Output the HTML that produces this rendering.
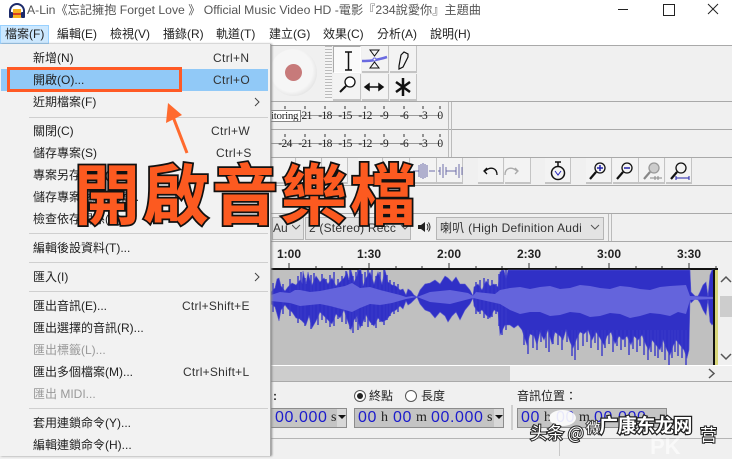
<!DOCTYPE html>
<html><head><meta charset="utf-8"><style>
html,body{margin:0;padding:0}
body{width:732px;height:456px;overflow:hidden;position:relative;background:#f0f0f0;font-family:"Liberation Sans","Noto Sans CJK TC",sans-serif;font-size:12px;color:#222}
div,span{position:absolute;white-space:nowrap}
.t{line-height:18px;height:18px}
.l{left:0;width:732px;height:1px;background:#a9a9a9}
.m{left:33px}.s{color:#333;letter-spacing:.35px}
.sep{left:29px;width:239px;height:1px;background:#cfcfcf}
.b{background:#f3f3f3;border-right:1px solid #c4c4c4;border-bottom:2px solid #c4c4c4;box-sizing:border-box}
.n{font:11.500px/12px "Liberation Serif",serif;color:#222;letter-spacing:-.6px;transform:translateX(-50%)}
.rt{font:bold 12px/14px "Liberation Sans",sans-serif;color:#222;transform:translateX(-50%);top:247px}
.box{background:#c4c4c4;border:1px solid #8c8c8c;box-sizing:border-box;height:20px;top:408px}
.dg{font:16px/18px "Liberation Sans",sans-serif;color:#1c1ccc;letter-spacing:.6px}
.u{font:14px/18px "Liberation Serif",serif;color:#222}
</style></head><body>
<!-- title -->
<div style="left:0;top:0;width:732px;height:45px;background:#fff"></div>
<svg style="position:absolute;left:8px;top:2px" width="18" height="18" viewBox="0 0 18 18"><path d="M2 11V9a7 7 0 0 1 14 0v2" fill="none" stroke="#1c2a6a" stroke-width="2"/><rect x="1" y="10" width="4" height="6" rx="1" fill="#1c2a6a"/><rect x="13" y="10" width="4" height="6" rx="1" fill="#1c2a6a"/><rect x="5" y="7" width="8" height="9" fill="#f5b21e"/><rect x="5" y="11" width="8" height="2" fill="#d8401e"/></svg>
<div class="t" style="left:27px;top:1px;font-size:12.200px;color:#555">A-Lin《忘記擁抱 Forget Love 》 Official Music Video HD -電影『234說愛你』主題曲</div>
<div style="left:618px;top:9px;width:10px;height:1px;background:#222"></div>
<div style="left:663px;top:4px;width:10px;height:10px;border:1px solid #222"></div>
<svg style="position:absolute;left:707px;top:3px" width="12" height="12"><path d="M1 1L11 11M11 1L1 11" stroke="#222" fill="none"/></svg>
<!-- menubar -->
<div style="left:0;top:25px;width:49px;height:19px;background:#cce8ff;border:1px solid #99d1ff;box-sizing:border-box"></div>
<div class="t" style="left:5px;top:25px">檔案(F)</div>
<div class="t" style="left:57px;top:25px">編輯(E)</div>
<div class="t" style="left:110px;top:25px">檢視(V)</div>
<div class="t" style="left:163px;top:25px">播錄(R)</div>
<div class="t" style="left:216px;top:25px">軌道(T)</div>
<div class="t" style="left:269px;top:25px">建立(G)</div>
<div class="t" style="left:323px;top:25px">效果(C)</div>
<div class="t" style="left:377px;top:25px">分析(A)</div>
<div class="t" style="left:430px;top:25px">說明(H)</div>
<div class="l" style="top:45px"></div>
<div class="l" style="top:101px"></div>
<div class="l" style="top:129px"></div>
<div class="l" style="top:157px"></div>
<div class="l" style="top:185px"></div>
<div class="l" style="top:213px"></div>
<div class="l" style="top:241px"></div>
<!-- record -->
<div style="left:270px;top:49px;width:47px;height:47px;border-radius:50%;background:radial-gradient(circle at 46% 46%,#f6f6f6 58%,#e6e6e6 72%,#b8b8b8 93%,#f0f0f0 100%)"></div>
<div style="left:285px;top:64px;width:17px;height:17px;border-radius:50%;background:#c77a7a"></div>
<div style="left:325px;top:46px;width:7px;height:54px;background:repeating-linear-gradient(#bbb 0 1px,#f4f4f4 1px 3px)"></div>
<!-- tools -->
<div class="b" style="left:333px;top:46px;width:28px;height:27px;background:#fafafa;border:1px solid #aaa;border-right-color:#fff;border-bottom-color:#fff"></div>
<div class="b" style="left:362px;top:46px;width:27px;height:27px"></div>
<div class="b" style="left:390px;top:46px;width:27px;height:27px"></div>
<div class="b" style="left:333px;top:74px;width:28px;height:27px"></div>
<div class="b" style="left:362px;top:74px;width:27px;height:27px"></div>
<div class="b" style="left:390px;top:74px;width:27px;height:27px"></div>
<svg style="position:absolute;left:333px;top:46px" width="84" height="55" fill="none" stroke="#111">
<path d="M12 6h7M12 24h7M15.500 6v18" stroke-width="1.500"/>
<path d="M37 4h9l-4.500 6zM37 22h9l-4.500-6z" stroke-width="1"/>
<path d="M29 15c6 0 12 0 25-4" stroke="#6a6ae0" stroke-width="2.500"/><circle cx="41.500" cy="13.500" r="1.500" fill="#fff" stroke="#6a6ae0"/>
<path d="M66 20l2-11 3-3 4 2 0 3-5 10-4 2z" stroke-width="1.200"/>
<circle cx="17" cy="36" r="5" stroke-width="1.300" fill="#fff"/><path d="M13 40l-6 6" stroke-width="2"/>
<path d="M32 41h18M36 38l-4 3 4 3zM46 38l4 3-4 3z" stroke-width="1.500" fill="#111"/>
<path d="M70 32v18M63 36l14 10M77 36l-14 10" stroke-width="2.500"/>
</svg>
<!-- meters -->
<div style="left:270px;top:115px;width:171px;height:1px;background:#999"></div>
<div style="left:270px;top:143px;width:171px;height:1px;background:#999"></div>
<div style="left:448px;top:102px;width:1px;height:55px;background:#bbb"></div>
<div style="left:451px;top:102px;width:1px;height:55px;background:#bbb"></div>
<svg style="position:absolute;left:270px;top:105px" width="175" height="38" stroke="#333"><path d="M15 1v3M35 1v3M55 1v3M75 1v3M95 1v3M114 1v3M134 1v3M153 1v3M170 1v3M15 29v3M35 29v3M55 29v3M75 29v3M95 29v3M114 29v3M134 29v3M153 29v3M170 29v3"/></svg>
<div class="n" style="left:305px;top:110px">-21</div><div class="n" style="left:325px;top:110px">-18</div><div class="n" style="left:345px;top:110px">-15</div><div class="n" style="left:365px;top:110px">-12</div><div class="n" style="left:384px;top:110px">-9</div><div class="n" style="left:404px;top:110px">-6</div><div class="n" style="left:423px;top:110px">-3</div><div class="n" style="left:440px;top:110px">0</div>
<div class="n" style="left:285px;top:138px">-24</div><div class="n" style="left:305px;top:138px">-21</div><div class="n" style="left:325px;top:138px">-18</div><div class="n" style="left:345px;top:138px">-15</div><div class="n" style="left:365px;top:138px">-12</div><div class="n" style="left:384px;top:138px">-9</div><div class="n" style="left:404px;top:138px">-6</div><div class="n" style="left:423px;top:138px">-3</div><div class="n" style="left:440px;top:138px">0</div>
<div style="left:270px;top:110px;width:31px;height:12px;background:#fff;border:1px solid #888;box-sizing:border-box;overflow:hidden;font:11px/11px 'Liberation Serif',serif;color:#222;letter-spacing:-.3px">itoring</div>
<!-- row 3 buttons -->
<div class="b" style="left:272px;top:158px;width:24px;height:26px"></div><div class="b" style="left:297px;top:158px;width:25px;height:26px"></div><div class="b" style="left:323px;top:158px;width:25px;height:26px"></div><div class="b" style="left:358px;top:158px;width:25px;height:26px"></div><div class="b" style="left:384px;top:158px;width:26px;height:26px"></div>
<div class="b" style="left:411px;top:158px;width:26px;height:26px"></div>
<div class="b" style="left:437px;top:158px;width:26px;height:26px"></div>
<div class="b" style="left:478px;top:158px;width:26px;height:26px"></div>
<div class="b" style="left:505px;top:158px;width:26px;height:26px"></div>
<div class="b" style="left:545px;top:158px;width:26px;height:26px"></div>
<div class="b" style="left:586px;top:158px;width:26px;height:26px"></div>
<div class="b" style="left:613px;top:158px;width:26px;height:26px"></div>
<div class="b" style="left:639px;top:158px;width:26px;height:26px"></div>
<div class="b" style="left:666px;top:158px;width:26px;height:26px"></div>
<svg style="position:absolute;left:410px;top:158px" width="290" height="26" fill="none" stroke="#111">
<path d="M3 13h6M9 7v12M11 6v14M13 5v16M15 6v14M17 7v12M19 13h6" stroke="#6c6ca8"/>
<path d="M28 13h2M30 9v8M33 6v14M36 9v8M36 13h10M46 9v8M49 6v14M52 9v8" stroke="#6c6ca8"/>
<path d="M77 10l-3 3 3 3M75 13c6-5 12-3 12 4" stroke-width="1.300"/>
<path d="M105 10l3 3-3 3M107 13c-6-5-12-3-12 4" stroke="#aaa" stroke-width="1.300"/>
<circle cx="148" cy="15" r="6.500" stroke-width="1.500"/><path d="M148 4v4M145 4h6" stroke-width="1.500"/><path d="M145 13l3 4 3-4" stroke="#2222bb"/>
<circle cx="190" cy="10" r="5" stroke-width="1.300"/><path d="M186 14l-6 7" stroke-width="2.200"/><path d="M187 10h6M190 7v6" stroke="#2222aa" stroke-width="1.500"/>
<circle cx="217" cy="10" r="5" stroke-width="1.300"/><path d="M213 14l-6 7" stroke-width="2.200"/><path d="M214 10h6" stroke="#2222aa" stroke-width="1.500"/>
<circle cx="244" cy="10" r="5" stroke="#999" fill="#ccc" stroke-width="1.300"/><path d="M240 14l-6 7" stroke="#888" stroke-width="2.200"/><path d="M240 20h12M245 18v4M248 18v4" stroke="#888"/>
<circle cx="271" cy="10" r="5" stroke-width="1.300"/><path d="M267 14l-6 7" stroke-width="2.200"/><path d="M266 20h13M266 18v4M279 18v4" stroke="#2222aa"/>
</svg>
<!-- combos -->
<div style="left:272px;top:217px;width:32px;height:23px;background:#e3e3e3;border:1px solid #b5b5b5;box-sizing:border-box"></div>
<div class="t" style="left:273px;top:219px;color:#333">Au</div>
<div style="left:305px;top:217px;width:106px;height:23px;background:#e3e3e3;border:1px solid #b5b5b5;box-sizing:border-box"></div>
<div class="t" style="left:309px;top:219px;color:#333;letter-spacing:.2px">2 (Stereo) Recc</div>
<svg style="position:absolute;left:292px;top:224px" width="120" height="8" fill="none" stroke="#555"><path d="M0 1l4 4 4-4M109 1l4 4 4-4"/></svg>
<svg style="position:absolute;left:417px;top:220px" width="14" height="14"><path d="M1 5h3l4-3v10l-4-3H1z" fill="#222"/><path d="M10 4q2 3 0 6M11.500 2.500q3 4.500 0 9" fill="none" stroke="#222"/></svg>
<div style="left:436px;top:217px;width:168px;height:23px;background:#e3e3e3;border:1px solid #b5b5b5;box-sizing:border-box"></div>
<div class="t" style="left:440px;top:219px;color:#333;letter-spacing:.25px">喇叭 (High Definition Audi</div>
<svg style="position:absolute;left:590px;top:224px" width="10" height="8" fill="none" stroke="#555"><path d="M1 1l4 4 4-4"/></svg>
<div style="left:608px;top:214px;width:1px;height:27px;background:#bbb"></div><div style="left:611px;top:214px;width:1px;height:27px;background:#bbb"></div>
<!-- ruler -->
<div style="left:272px;top:242px;width:460px;height:27px;background:#f0f0f0"></div>
<div class="rt" style="left:289px">1:00</div><div class="rt" style="left:369px">1:30</div><div class="rt" style="left:449px">2:00</div><div class="rt" style="left:529px">2:30</div><div class="rt" style="left:609px">3:00</div><div class="rt" style="left:689px">3:30</div>
<svg style="position:absolute;left:272px;top:262px" width="450" height="7" stroke="#333"><path d="M17 1v5M97 1v5M177 1v5M257 1v5M337 1v5M417 1v5" /><path d="M44 4v2M70 4v2M124 4v2M150 4v2M204 4v2M230 4v2M284 4v2M310 4v2M364 4v2M390 4v2M444 4v2" /></svg>
<!-- wave -->
<div style="left:270px;top:270px;width:449px;height:95px;background:#c0c0c0"></div>
<div style="left:270px;top:268px;width:449px;height:2px;background:#111"></div>
<svg style="position:absolute;left:0;top:0" width="732" height="456">
<polygon fill="#3030c6" stroke="#5a5ad0" stroke-width=".6" points="271,292 275,288 277,279 279,278 281,286 285,291 288,287 292,283 296,285 300,280 302,283 303,271 306,284 308,272 310,280 312,285 316,276 320,282 324,278 328,284 332,278 336,286 340,282 344,278 347,272 349,280 351,270 354,282 357,276 359,270 361,270 363,286 366,278 370,272 374,284 378,272 382,284 385,270 388,282 392,285 396,286 400,290 403,289 406,295 408,289 411,291 414,295 417,297 420,290 425,284 430,283 435,280 440,284 445,276 448,278 452,282 456,277 460,284 465,284 470,290 473,296 474,287 478,284 482,290 486,281 490,286 494,284 498,287 500,272 504,270 506,280 508,270 690,270 691,292 695,296 698,296 700,292 703,285 706,282 708,296 710,275 712,270 714,270 714,323 712,325 710,322 708,300 706,315 703,310 700,303 698,300 695,299 691,303 690,300 689,350 687,358 684,350 680,345 676,340 673,346 670,355 667,350 663,340 660,350 656,345 652,340 649,350 646,345 642,335 638,340 634,336 631,345 627,336 623,340 619,336 615,344 611,332 607,336 604,345 600,338 596,332 592,340 588,330 584,334 580,332 577,338 573,348 570,342 566,330 563,340 560,336 555,332 552,344 548,330 544,340 540,332 537,345 534,336 530,334 527,345 522,330 518,325 514,328 510,325 505,325 500,335 498,312 494,310 490,318 486,315 482,310 478,312 474,306 473,298 470,304 465,310 460,320 456,312 452,316 448,322 445,316 440,312 435,318 430,312 425,310 420,304 417,297 415,299 411,303 408,305 406,301 403,309 400,306 396,310 392,312 388,318 386,320 382,322 378,318 374,326 370,322 366,315 363,322 360,328 357,316 354,320 351,330 348,322 344,310 340,318 336,314 332,324 328,320 324,316 320,312 316,321 312,328 309,316 306,325 303,322 300,319 296,318 292,312 288,309 285,305 281,310 279,321 275,307 271,304"/>
<path fill="none" stroke="#3838c8" stroke-width="1.400" d="M273 283V312M283 284V314M290 279V316M298 276V323M301 272V320M305 278V326M311 275V329M314 273V322M318 280V325M322 274V320M326 279V323M330 275V327M334 272V326M338 279V319M342 276V322M346 271V324M350 270V329M353 276V333M356 272V322M358 270V330M362 274V326M365 272V322M368 270V327M372 270V325M376 276V328M380 272V322M384 270V325M387 275V320M390 280V316M394 282V314M398 284V312M476 282V314M480 280V314M484 278V318M488 279V319M492 280V317M496 284V314M499 274V326M502 270V335M506 270V330M524 330V345M528 330V354M533 330V348M537 330V350M541 330V342M546 330V348M549 330V352M553 330V344M558 330V345M562 330V350M567 330V342M572 330V356M575 330V360M578 330V350M583 330V346M587 330V342M591 330V348M595 330V343M598 330V350M602 330V356M605 330V348M609 330V344M613 330V352M617 330V346M621 330V350M625 330V347M629 330V355M633 330V349M637 330V352M640 330V346M644 330V355M648 330V360M651 330V352M655 330V356M658 330V358M662 330V352M665 330V360M669 330V365M672 330V358M675 330V352M678 330V356M682 330V358M686 330V365"/>
<polygon fill="#6464dc" points="271,295 280,292 290,293 295,290 300,290 310,292 320,291 330,289 345,286 352,283 360,288 370,287 380,290 392,293 400,295 406,297 412,296 417,297 430,292 450,290 468,293 473,296 476,292 495,294 500,290 510,288 520,287 530,289 540,287 550,286 560,289 570,288 580,285 590,286 600,288 610,289 620,286 630,287 640,289 650,290 660,287 670,286 686,285 690,296 714,297 714,299 690,300 686,314 678,312 670,316 660,314 650,313 640,316 630,318 620,314 610,313 600,316 590,317 580,313 570,312 560,315 550,316 540,312 530,312 520,314 510,310 500,304 473,298 450,304 430,302 417,297 406,299 392,303 380,305 370,304 360,308 352,312 345,310 330,306 320,304 310,305 300,306 290,303 271,301"/>
</svg>
<div style="left:713px;top:270px;width:2px;height:95px;background:#111"></div>
<div style="left:715px;top:270px;width:3px;height:95px;background:#d8d67a"></div>
<div style="left:718px;top:268px;width:14px;height:98px;background:#f0f0f0"></div>
<div style="left:720px;top:296px;width:12px;height:21px;background:#cdcdcd"></div>
<svg style="position:absolute;left:720px;top:275px" width="12" height="90" fill="none" stroke="#555" stroke-width="1.500"><path d="M1 7l5-5 5 5M1 79l5 5 5-5"/></svg>
<div style="left:270px;top:365px;width:462px;height:1px;background:#fff"></div>
<div style="left:270px;top:366px;width:449px;height:15px;background:#f0f0f0"></div>
<div style="left:270px;top:366px;width:240px;height:15px;background:#cdcdcd"></div>
<svg style="position:absolute;left:707px;top:368px" width="10" height="11" fill="none" stroke="#555" stroke-width="1.500"><path d="M2 1l5 4.500-5 4.500"/></svg>
<div style="left:270px;top:381px;width:462px;height:1px;background:#a9a9a9"></div>
<!-- bottom -->
<div class="t" style="left:273px;top:387px;font-weight:bold">:</div>
<div style="left:354px;top:390px;width:12px;height:12px;border:1px solid #555;border-radius:50%;background:#fff;box-sizing:border-box"></div>
<div style="left:357px;top:393px;width:6px;height:6px;border-radius:50%;background:#222"></div>
<div class="t" style="left:369px;top:387px">終點</div>
<div style="left:405px;top:390px;width:12px;height:12px;border:1px solid #555;border-radius:50%;background:#fff;box-sizing:border-box"></div>
<div class="t" style="left:421px;top:387px">長度</div>
<div class="t" style="left:517px;top:387px">音訊位置：</div>
<div style="left:511px;top:405px;width:2px;height:25px;background:#cfcfcf"></div>
<div class="box" style="left:270px;width:77px"></div>
<div class="dg" style="left:275px;top:409px">00.000</div><div class="u" style="left:331px;top:409px">s</div>
<div style="left:337px;top:409px;width:9px;height:18px;background:#d8d8d8"></div><svg style="position:absolute;left:338px;top:415px" width="8" height="5"><path d="M0 0h8L4 4z" fill="#111"/></svg>
<div class="box" style="left:354px;width:150px"></div>
<div class="dg" style="left:358px;top:409px">00</div><div class="u" style="left:381px;top:409px">h</div><div class="dg" style="left:393px;top:409px">00</div><div class="u" style="left:416px;top:409px">m</div><div class="dg" style="left:431px;top:409px">00.000</div><div class="u" style="left:487px;top:409px">s</div>
<div style="left:494px;top:409px;width:9px;height:18px;background:#d8d8d8"></div><svg style="position:absolute;left:495px;top:415px" width="8" height="5"><path d="M0 0h8L4 4z" fill="#111"/></svg>
<div class="box" style="left:517px;width:150px"></div>
<div class="dg" style="left:521px;top:409px">00</div><div class="u" style="left:544px;top:409px">h</div><div class="dg" style="left:556px;top:409px">00</div><div class="u" style="left:579px;top:409px">m</div><div class="dg" style="left:594px;top:409px">00.000</div>
<div style="left:270px;top:438px;width:462px;height:1px;background:#b5b5b5"></div>
<div style="left:559px;top:439px;width:1px;height:17px;background:#c8c8c8"></div>
<!-- menu -->
<div style="left:0;top:44px;width:270px;height:412px;background:#f2f2f2;border-right:1px solid #a8a8a8;box-shadow:1px 0 2px #888"></div>
<div style="left:1px;top:69px;width:267px;height:22px;background:#91c9f7"></div>
<div class="t m" style="top:49px">新增(N)</div><div class="t s" style="left:213px;top:49px">Ctrl+N</div>
<div class="t m" style="top:71px">開啟(O)...</div><div class="t s" style="left:213px;top:71px">Ctrl+O</div>
<div class="t m" style="top:93px">近期檔案(F)</div>
<svg style="position:absolute;left:254px;top:97px" width="7" height="10" fill="none" stroke="#444"><path d="M1 1l4 4-4 4"/></svg>
<div class="sep" style="top:117px"></div>
<div class="t m" style="top:122px">關閉(C)</div><div class="t s" style="left:211px;top:122px">Ctrl+W</div>
<div class="t m" style="top:144px">儲存專案(S)</div><div class="t s" style="left:216px;top:144px">Ctrl+S</div>
<div class="t m" style="top:166px">專案另存新檔(A)...</div>
<div class="t m" style="top:188px">儲存專案壓縮檔案...</div>
<div class="t m" style="top:210px">檢查依存關係(D)...</div>
<div class="sep" style="top:233px"></div>
<div class="t m" style="top:239px">編輯後設資料(T)...</div>
<div class="sep" style="top:262px"></div>
<div class="t m" style="top:268px">匯入(I)</div>
<svg style="position:absolute;left:254px;top:272px" width="7" height="10" fill="none" stroke="#444"><path d="M1 1l4 4-4 4"/></svg>
<div class="sep" style="top:291px"></div>
<div class="t m" style="top:297px">匯出音訊(E)...</div><div class="t s" style="left:182px;top:297px;letter-spacing:.25px">Ctrl+Shift+E</div>
<div class="t m" style="top:319px">匯出選擇的音訊(R)...</div>
<div class="t m" style="top:341px;color:#999">匯出標籤(L)...</div>
<div class="t m" style="top:363px">匯出多個檔案(M)...</div><div class="t s" style="left:183px;top:363px;letter-spacing:.25px">Ctrl+Shift+L</div>
<div class="t m" style="top:385px;color:#999">匯出 MIDI...</div>
<div class="sep" style="top:408px"></div>
<div class="t m" style="top:414px">套用連鎖命令(Y)...</div>
<div class="t m" style="top:436px">編輯連鎖命令(H)...</div>
<!-- annotation -->
<div style="left:7px;top:67px;width:175px;height:25px;border:3px solid #ff5a25;box-sizing:border-box"></div>
<svg style="position:absolute;left:150px;top:95px" width="50" height="65"><path d="M37 58L20 14" stroke="#ff6a2e" stroke-width="3" fill="none"/><path d="M18 8L16 28L32 20z" fill="#ff6a2e"/></svg>
<div style="left:74px;top:149px;font:bold 66px/84px 'Noto Sans CJK TC','Liberation Sans',sans-serif;color:#fc5a20;-webkit-text-stroke:3.500px #111;paint-order:stroke fill;letter-spacing:3px">開啟音樂檔</div>
<!-- watermark -->
<div style="left:549px;top:410px;width:27px;height:16px;border-radius:50%;background:#fff;opacity:.9"></div>
<div style="left:650px;top:436px;font:bold 22px/22px 'Liberation Sans',sans-serif;color:#fff;opacity:.6">PK</div>
<div style="left:530px;top:420px;font:17px/24px 'Noto Sans CJK SC',sans-serif;color:#fff;-webkit-text-stroke:2px #222;paint-order:stroke fill">头条 @</div>
<div style="left:586px;top:414px;font:14px/28px 'Noto Sans CJK SC',sans-serif;color:#fff;-webkit-text-stroke:2px #444;paint-order:stroke fill">微</div>
<div style="left:599px;top:411px;font:bold 19px/28px 'Noto Sans CJK SC',sans-serif;color:#fff;-webkit-text-stroke:2.500px #222;paint-order:stroke fill;letter-spacing:-.4px">广康东龙网</div>
<div style="left:700px;top:422px;font:17px/24px 'Noto Sans CJK SC',sans-serif;color:#fff;-webkit-text-stroke:2px #222;paint-order:stroke fill">营</div>
</body></html>
